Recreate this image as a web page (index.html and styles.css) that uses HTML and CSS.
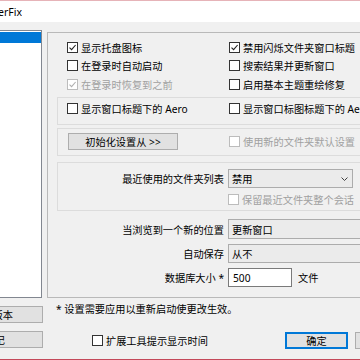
FILE: index.html
```html
<!DOCTYPE html>
<html lang="zh-CN">

<head>
    <meta charset="UTF-8">
    <title>ShellFolderFix</title>
    <link rel="stylesheet" href="styles.css">
</head>

<body>
    <div class="titlebar">
        <div class="title">ShellFolderFix</div>
    </div>

    <div class="client">
        <div class="side">
            <div class="list">
                <div class="list-item"></div>
            </div>
            <button class="btn side-btn">检查新版本</button>
            <button class="btn side-btn log-btn">更新日记</button>
        </div>

        <div class="content">
            <div class="panel">
                <div class="grid checks">
                    <label class="check"><span class="box"><svg viewBox="0 0 9 9"><polyline points="1.5,4.6 3.6,6.7 7.6,2"/></svg></span>显示托盘图标</label>
                    <label class="check"><span class="box"><svg viewBox="0 0 9 9"><polyline points="1.5,4.6 3.6,6.7 7.6,2"/></svg></span>禁用闪烁文件夹窗口标题</label>
                    <label class="check"><span class="box"></span>在登录时自动启动</label>
                    <label class="check"><span class="box"></span>搜索结果并更新窗口</label>
                    <label class="check off"><span class="box"><svg viewBox="0 0 9 9"><polyline points="1.5,4.6 3.6,6.7 7.6,2"/></svg></span>在登录时恢复到之前</label>
                    <label class="check"><span class="box"></span>启用基本主题重绘修复</label>
                </div>

                <div class="section grid sec-a">
                    <label class="check"><span class="box"></span>显示窗口标题下的 Aero</label>
                    <label class="check"><span class="box"></span>显示窗口标图标题下的 Aero</label>
                </div>

                <div class="section grid sec-b">
                    <div><button class="btn init-btn">初始化设置从 &gt;&gt;</button></div>
                    <label class="check off"><span class="box"></span>使用新的文件夹默认设置</label>
                </div>

                <div class="section form sec-c">
                    <span class="label">最近使用的文件夹列表</span>
                    <div class="combo short"><span>禁用</span><svg viewBox="0 0 7 4"><polyline points="0.5,0.5 3.5,3.5 6.5,0.5"/></svg></div>
                    <span></span>
                    <label class="check off"><span class="box"></span>保留最近文件夹整个会话</label>
                </div>

                <div class="form rows">
                    <span class="label">当浏览到一个新的位置</span>
                    <div class="combo"><span>更新窗口</span><svg viewBox="0 0 7 4"><polyline points="0.5,0.5 3.5,3.5 6.5,0.5"/></svg></div>
                    <span class="label">自动保存</span>
                    <div class="combo"><span>从不</span><svg viewBox="0 0 7 4"><polyline points="0.5,0.5 3.5,3.5 6.5,0.5"/></svg></div>
                    <span class="label">数据库大小 *</span>
                    <div class="size"><span class="field">500</span>文件</div>
                </div>
            </div>

            <p class="note">* 设置需要应用以重新启动使更改生效。</p>

            <div class="footer">
                <label class="check"><span class="box"></span>扩展工具提示显示时间</label>
                <button class="btn default">确定</button>
                <button class="btn">取消</button>
            </div>
        </div>
    </div>
</body>

</html>
```

FILE: styles.css
```css
* {
    padding: 0;
    margin: 0;
    box-sizing: border-box;
}

body {
    width: 360px;
    height: 360px;
    overflow: hidden;
    background-color: #f0f0f0;
    font-family: "Noto Sans", "Noto Sans CJK SC", sans-serif;
    font-size: 10.2px;
    color: #000;
    border-top: 1px solid #e6b3b8;
    border-bottom: 1px solid #c4495a;
}

.titlebar {
    height: 21px;
    background-color: #fff;
    display: flex;
    align-items: center;
}

.title {
    width: 22px;
    overflow: hidden;
    white-space: nowrap;
    display: flex;
    justify-content: flex-end;
    font-size: 10.5px;
}

.client {
    display: flex;
    padding-top: 8px;
}

.side {
    width: 43px;
    flex: none;
    display: flex;
    flex-direction: column;
    gap: 8px;
}

.list {
    width: 42px;
    height: 268px;
    background-color: #fff;
    border: 1px solid #828790;
    border-left: none;
    padding-top: 1px;
}

.list-item {
    height: 11px;
    background-color: #0078d7;
}

.btn {
    height: 17px;
    width: 63px;
    background-color: #e1e1e1;
    border: 1px solid #adadad;
    font: inherit;
    color: #000;
    display: flex;
    align-items: center;
    justify-content: center;
    white-space: nowrap;
}

.side-btn {
    width: 43px;
    border-left: none;
    overflow: hidden;
    justify-content: flex-end;
    padding-right: 29px;
}

.log-btn {
    padding-right: 37px;
}

.content {
    margin-left: 4px;
    width: 340px;
    flex: none;
    display: flex;
    flex-direction: column;
}

.panel {
    margin-top: 2px;
    height: 266px;
    border: 1px solid #b9b9b9;
    border-right: none;
    padding: 5px 0 0 9px;
}

.grid {
    display: grid;
    grid-template-columns: 162px 1fr;
}

.checks {
    padding-left: 10px;
    grid-auto-rows: 18.5px;
}

.check {
    display: flex;
    align-items: center;
    gap: 3px;
    white-space: nowrap;
}

.box {
    width: 11px;
    height: 11px;
    flex: none;
    border: 1px solid #333;
    background-color: #fff;
    display: flex;
    align-items: center;
    justify-content: center;
}

.box svg {
    width: 9px;
    height: 9px;
    fill: none;
    stroke: #222;
    stroke-width: 1.1;
}

.check.off {
    color: #a0a0a0;
}

.check.off .box {
    border-color: #bcbcbc;
}

.check.off .box svg {
    stroke: #b0b0b0;
}

.section {
    margin-right: 10px;
    border: 1px solid #dcdcdc;
    padding-left: 9px;
}

.sec-a {
    margin-top: 3.5px;
    padding-top: 1.5px;
    padding-bottom: 6px;
    grid-auto-rows: 18.5px;
}

.sec-b {
    margin-top: 3px;
    padding-top: 4px;
    padding-bottom: 5px;
    align-items: center;
}

.init-btn {
    width: 110px;
    margin-left: 1px;
}

.form {
    display: grid;
    grid-template-columns: 161px 1fr;
    align-items: center;
}

.label {
    text-align: right;
    padding-right: 4px;
    white-space: nowrap;
}

.sec-c {
    margin-top: 6px;
    padding-top: 6px;
    padding-bottom: 1px;
    grid-template-rows: 19px 20px;
    row-gap: 1px;
}

.combo {
    width: 150px;
    height: 100%;
    border: 1px solid #acacac;
    background-color: #ebebeb;
    display: flex;
    align-items: center;
    justify-content: space-between;
    padding: 0 4px 0 3px;
}

.combo.short {
    width: 125px;
}

.combo svg {
    width: 7px;
    height: 4px;
    fill: none;
    stroke: #404040;
    stroke-width: 1;
}

.rows {
    margin-top: 8px;
    padding-left: 10px;
    grid-template-rows: 20px 19px 19px;
    row-gap: 5px;
}

.size {
    height: 100%;
    display: flex;
    align-items: center;
    gap: 6px;
}

.field {
    width: 64px;
    height: 100%;
    border: 1px solid #7a7a7a;
    background-color: #fff;
    padding-left: 4px;
    display: flex;
    align-items: center;
}

.note {
    margin-top: 4px;
    padding-left: 9px;
    line-height: 14px;
}

.footer {
    margin-top: 16px;
    height: 17px;
    display: flex;
    align-items: center;
    padding-left: 45px;
}

.footer .check {
    width: 193px;
    flex: none;
}

.footer .btn {
    flex: none;
}

.footer .btn + .btn {
    margin-left: 7px;
}

.btn.default {
    border-color: #0078d7;
    box-shadow: inset 0 0 0 1px #0078d7;
}
```
